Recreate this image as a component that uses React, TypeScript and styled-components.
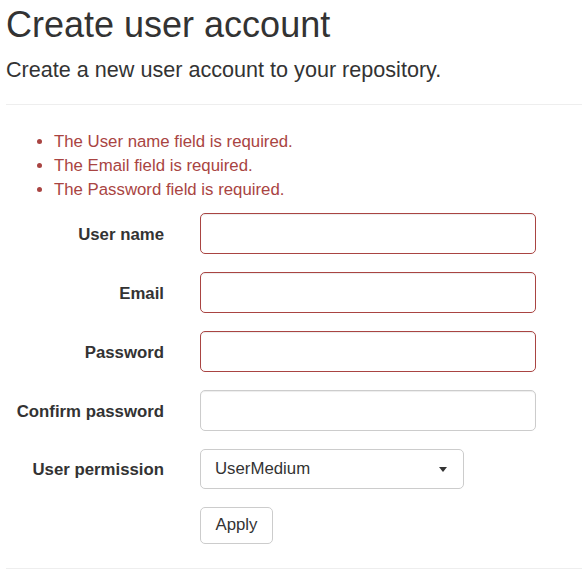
import React from "react";
import styled, { createGlobalStyle } from "styled-components";

const Global = createGlobalStyle`
  html, body { margin: 0; padding: 0; background: #fff; }
  body {
    font-family: "Liberation Sans", Arial, Helvetica, sans-serif;
    color: #333;
    font-size: 16.8px;
  }
  * { box-sizing: border-box; }
`;

const Page = styled.div`
  padding: 0 0 0 6px;
  width: 582px;
`;

const Title = styled.h1`
  font-size: 36px;
  font-weight: 500;
  line-height: 1.1;
  margin: 5px 0 0;
  color: #333;
`;

const Lead = styled.p`
  font-size: 21.6px;
  line-height: 1.4;
  margin: 10px 0 0;
`;

const Rule = styled.hr<{ $top: number }>`
  border: 0;
  border-top: 1px solid #eee;
  margin: ${(p) => p.$top}px 0 0;
  height: 0;
`;

const Errors = styled.ul`
  margin: 25px 0 0;
  padding: 0 0 0 48px;
  color: #a94442;
  font-size: 16.8px;
  line-height: 24px;
  list-style: disc;
`;

const Form = styled.form`
  display: grid;
  grid-template-columns: 158px 336px;
  column-gap: 36px;
  row-gap: 18px;
  margin-top: 11px;
  align-items: center;
`;

const Label = styled.label`
  font-weight: bold;
  font-size: 16.8px;
  text-align: right;
  white-space: nowrap;
  padding-top: 3px;
`;

const Input = styled.input<{ $error?: boolean }>`
  display: block;
  width: 336px;
  height: 41px;
  padding: 6px 14px;
  font-family: inherit;
  font-size: 16.8px;
  color: #555;
  background: #fff;
  border: 1px solid ${(p) => (p.$error ? "#a94442" : "#ccc")};
  border-radius: 5px;
  box-shadow: inset 0 1px 1px rgba(0, 0, 0, 0.075);
  outline: none;
`;

const SelectWrap = styled.div`
  position: relative;
  width: 264px;
`;

const Select = styled.select`
  display: block;
  width: 264px;
  height: 40px;
  padding: 0 14px;
  font-family: inherit;
  font-size: 16.8px;
  color: #333;
  background: #fff;
  border: 1px solid #ccc;
  border-radius: 5px;
  appearance: none;
  -webkit-appearance: none;
  outline: none;
`;

const Caret = styled.svg`
  position: absolute;
  right: 17px;
  top: 18px;
  pointer-events: none;
`;

const Spacer = styled.div``;

const Button = styled.button`
  justify-self: start;
  width: 73px;
  height: 37px;
  padding: 0;
  font-family: inherit;
  font-size: 16.8px;
  color: #333;
  background: #fff;
  border: 1px solid #ccc;
  border-radius: 5px;
  cursor: pointer;
`;

const fields = [
  { label: "User name", type: "text", error: true },
  { label: "Email", type: "email", error: true },
  { label: "Password", type: "password", error: true },
  { label: "Confirm password", type: "password", error: false },
];

export default function App() {
  return (
    <>
      <Global />
      <Page>
        <Title>Create user account</Title>
        <Lead>Create a new user account to your repository.</Lead>
        <Rule $top={19} />
        <Errors>
          <li>The User name field is required.</li>
          <li>The Email field is required.</li>
          <li>The Password field is required.</li>
        </Errors>
        <Form onSubmit={(e) => e.preventDefault()}>
          {fields.map((f) => (
            <React.Fragment key={f.label}>
              <Label>{f.label}</Label>
              <Input type={f.type} $error={f.error} />
            </React.Fragment>
          ))}
          <Label>User permission</Label>
          <SelectWrap>
            <Select defaultValue="UserMedium">
              <option>UserLow</option>
              <option>UserMedium</option>
              <option>UserHigh</option>
            </Select>
            <Caret width="8" height="5" viewBox="0 0 8 5">
              <path d="M0 0h8L4 5z" fill="#333" />
            </Caret>
          </SelectWrap>
          <Spacer />
          <Button type="submit">Apply</Button>
        </Form>
        <Rule $top={24} />
      </Page>
    </>
  );
}
